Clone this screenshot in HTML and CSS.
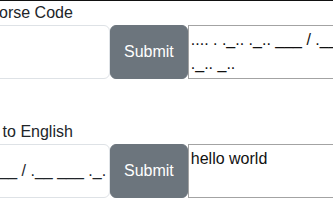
FILE: index.html
```html
<!DOCTYPE html>
<html lang="en">
<head>
    <meta charset="UTF-8">
    <meta name="viewport" content="width=device-width, initial-scale=1.0">
    <title>Morse Code Translator</title>
    <link rel="stylesheet" href="styles.css">
</head>
<body>
    <div class="topbar"></div>

    <div class="page">
        <label class="title" for="english">English to Morse Code</label>
        <div class="row">
            <input type="text" id="english" class="field" value="hello world">
            <button class="button">Submit</button>
            <textarea class="output" rows="2">.... . ._.. ._.. ___ / .__ ___ ._. ._.. _..</textarea>
        </div>

        <label class="title" for="morse">Morse Code to English</label>
        <div class="row">
            <input type="text" id="morse" class="field scrolled" value=".... . ._.. ._.. ___ / .__ ___ ._. ._.. _..">
            <button class="button">Submit</button>
            <textarea class="output" rows="2">hello world</textarea>
        </div>
    </div>
</body>
</html>
```

FILE: styles.css
```css
body {
    font-family: "Liberation Sans", Arial, sans-serif;
    font-size: 16px;
    line-height: 1.5;
    color: #212529;
    background-color: #ffffff;
    margin: 0;
    padding: 0;
    overflow: hidden;
}

.topbar {
    height: 1px;
    background-color: #111111;
}

.page {
    margin-left: -89px;
}

.title {
    display: block;
}

.row {
    display: flex;
    align-items: stretch;
    margin-bottom: 41px;
}

input, button, textarea {
    font-family: inherit;
    font-size: inherit;
    line-height: inherit;
    margin: 0;
}

.field {
    width: 199px;
    box-sizing: border-box;
    padding: 6px 3px 6px 12px;
    border: 1px solid #dee2e6;
    border-radius: 6px;
    color: #212529;
}

.scrolled {
    text-indent: -18px;
}

.button {
    flex: none;
    padding: 6px 13px;
    background-color: #6c757d;
    border: 1px solid #6c757d;
    border-radius: 6px;
    color: #ffffff;
    cursor: pointer;
}

.output {
    flex: none;
    width: 221px;
    box-sizing: border-box;
    padding: 2px;
    border: 1px solid #a3a3a3;
    color: #111111;
    resize: none;
    overflow: hidden;
}
```
